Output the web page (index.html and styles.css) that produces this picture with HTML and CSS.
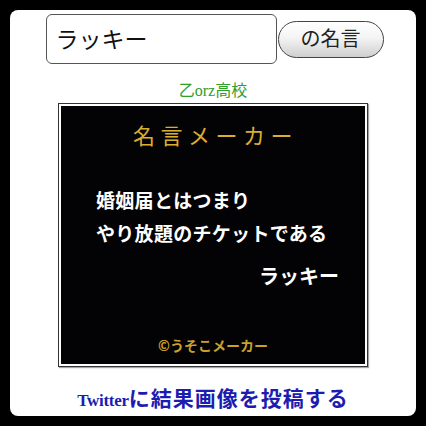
FILE: index.html
```html
<!DOCTYPE html>
<html>
<head>
	<meta charset="utf-8">
	<title>名言メーカー</title>
<link rel="stylesheet" href="styles.css">
</head>
<body>

<div class="panel">

	<form class="maker">
		<input class="name" type="text" value="ラッキー">
		<button class="go" type="button">の名言</button>
	</form>

	<div class="author">乙orz高校</div>

	<div class="frame">
		<div class="board">
			<div class="title">名言メーカー</div>
			<div class="quote">
				<div>婚姻届とはつまり</div>
				<div>やり放題のチケットである</div>
			</div>
			<div class="who">ラッキー</div>
			<div class="credit">©うそこメーカー</div>
		</div>
	</div>

	<a class="tweet" href="#"><span class="brand">Twitter</span>に結果画像を投稿する</a>

</div>

</body>
</html>
```

FILE: styles.css
```css
	body {
		margin:0;
		background-color:#000;
		font-family:"Noto Sans CJK JP", sans-serif;}

	.panel {
		margin:10px;
		height:406px;
		background-color:#fff;
		border-radius:8px;
		display:flex;
		flex-direction:column;
		align-items:center;}

	.maker {
		margin:4px 0 0 3px;
		display:flex;
		align-items:center;
		gap:1px;}

	.name {
		box-sizing:border-box;
		width:231px;
		height:50px;
		border:1.5px solid #555;
		border-radius:6px;
		padding:0 0 2px 9px;
		font-family:"Noto Sans CJK JP", sans-serif;
		font-size:23px;
		color:#111;
		outline:none;}

	.go {
		box-sizing:border-box;
		width:106px;
		height:37px;
		border:1.5px solid #444;
		border-radius:19px;
		background:linear-gradient(#fff, #f4f4f4 45%, #cfcfcf);
		font-family:"Noto Sans CJK JP", sans-serif;
		font-size:20px;
		color:#222;
		padding:0 0 2px;
		line-height:1;}

	.author {
		margin-top:17px;
		font-family:"Liberation Serif", "Noto Sans CJK JP", serif;
		font-size:16px;
		line-height:20px;
		color:#2e9e2e;}

	.frame {
		margin-top:2px;
		box-sizing:border-box;
		width:310px;
		height:264px;
		border:1px solid #333;
		padding:2px;
		box-shadow:1px 1px 1px rgba(0,0,0,0.35);}

	.board {
		height:100%;
		background-color:#030306;
		display:flex;
		flex-direction:column;}

	.title {
		margin-top:13px;
		text-align:center;
		font-size:22px;
		line-height:30px;
		font-weight:normal;
		letter-spacing:5.5px;
		padding-left:5px;
		color:#dcae30;}

	.quote {
		margin-top:34px;
		padding-left:35px;
		font-size:19px;
		line-height:33px;
		font-weight:bold;
		letter-spacing:0.3px;
		color:#fff;}

	.who {
		margin-top:12px;
		padding-right:26px;
		text-align:right;
		font-size:20px;
		line-height:30px;
		font-weight:bold;
		color:#fff;}

	.credit {
		margin-top:45px;
		text-align:center;
		font-size:14px;
		line-height:18px;
		font-weight:bold;
		color:#c9a227;}

	.tweet {
		margin-top:18px;
		font-size:21px;
		line-height:24px;
		font-weight:bold;
		letter-spacing:1px;
		color:#1c1cb0;
		text-decoration:none;}

	.brand {
		font-family:"Liberation Serif", serif;
		font-size:17px;
		letter-spacing:-0.3px;}
```
